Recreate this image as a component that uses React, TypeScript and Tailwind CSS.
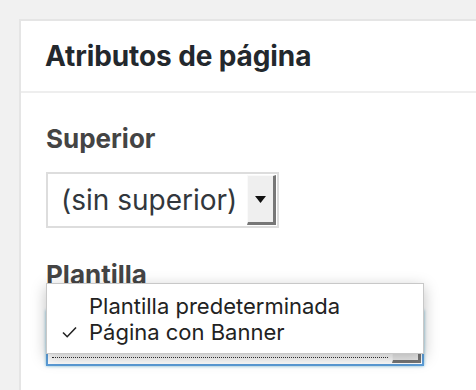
import React from "react";

export default function App() {
  const font = { fontFamily: "Inter, 'Noto Sans', sans-serif" };
  return (
    <div className="w-[476px] h-[390px] overflow-hidden bg-[#f1f1f1] pt-[19px] pl-[19px]" style={font}>
      <div className="relative w-[500px] h-[400px] bg-white border-2 border-[#e5e5e5]">
        <div className="h-[72px] border-b-2 border-[#eeeeee] flex items-center pl-[24px]">
          <h2 className="text-[28px] font-bold text-[#23282d] leading-none tracking-[-0.1px]">Atributos de página</h2>
        </div>
        <div className="pl-[25px] pt-[33px]">
          <div className="text-[26px] font-bold text-[#444] leading-none">Superior</div>
          <div className="mt-[20px] w-[233px] h-[56px] border-2 border-[#dddddd] bg-white flex items-stretch">
            <div className="flex-1 flex items-center pl-[13px] text-[28px] text-[#32373c]">(sin superior)</div>
            <div className="w-[29px] my-[1px] mr-[1px] bg-[#efefef] border-r-[3px] border-b-[3px] border-[#777] border-t border-l border-t-[#fafafa] border-l-[#fafafa] flex items-center justify-center">
              <svg width="11" height="7" viewBox="0 0 11 7"><path d="M0 0h11L5.5 7z" fill="#111" /></svg>
            </div>
          </div>
          <div className="mt-[34px] text-[26px] font-bold text-[#444] leading-none">Plantilla</div>
          <div className="relative mt-[22px] w-[378px] h-[56px] border-2 border-[#5b9dd9] bg-white shadow-[0_0_3px_rgba(30,140,190,0.6)] flex items-stretch">
            <div className="flex-1 relative pl-[13px] flex items-center text-[28px] text-[#32373c]">
              Página con Banner
              <div className="absolute left-[4px] right-[4px] bottom-[6px] border-b border-dotted border-[#333]" />
            </div>
            <div className="w-[29px] my-[1px] mr-[1px] bg-[#efefef] border-r-[3px] border-b-[3px] border-[#777] border-t border-l border-t-[#fafafa] border-l-[#fafafa]" />
          </div>
        </div>
        <div className="absolute left-[25px] top-[262px] w-[378px] h-[71px] bg-white border border-[#c8c8c8] shadow-[0_4px_14px_rgba(0,0,0,0.25)] pt-[9px] text-[22px] text-[#222] leading-[26px]">
          <div className="flex">
            <span className="w-[42px] shrink-0" />
            <span>Plantilla predeterminada</span>
          </div>
          <div className="flex items-center">
            <span className="w-[42px] shrink-0 pl-[15px] flex items-center">
              <svg width="15" height="12" viewBox="0 0 15 12"><path d="M1 6.5l4.2 4.2L14 1.5" fill="none" stroke="#222" strokeWidth="1.6" /></svg>
            </span>
            <span>Página con Banner</span>
          </div>
        </div>
      </div>
    </div>
  );
}
